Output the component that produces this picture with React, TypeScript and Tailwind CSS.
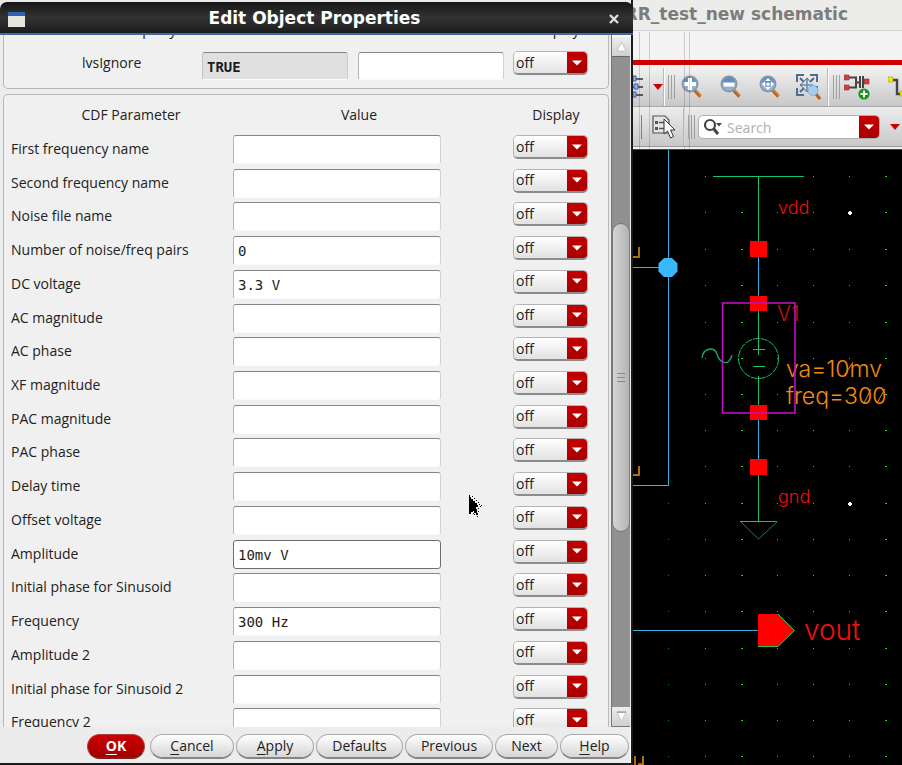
import { useId } from "react";

type Param = { label: string; value?: string; active?: boolean };

const params: Param[] = [
  { label: "First frequency name" },
  { label: "Second frequency name" },
  { label: "Noise file name" },
  { label: "Number of noise/freq pairs", value: "0" },
  { label: "DC voltage", value: "3.3 V" },
  { label: "AC magnitude" },
  { label: "AC phase" },
  { label: "XF magnitude" },
  { label: "PAC magnitude" },
  { label: "PAC phase" },
  { label: "Delay time" },
  { label: "Offset voltage" },
  { label: "Amplitude", value: "10mv V", active: true },
  { label: "Initial phase for Sinusoid" },
  { label: "Frequency", value: "300 Hz" },
  { label: "Amplitude 2" },
  { label: "Initial phase for Sinusoid 2" },
  { label: "Frequency 2" },
];

function DisplaySelect({ label }: { label: string }) {
  return (
    <div className="relative h-6 w-[75px] overflow-hidden rounded-[5px] border border-[#b4b4b4] border-b-2 border-b-[#8c8c8c]">
      <select
        aria-label={label}
        defaultValue="off"
        className="block h-full w-full appearance-none bg-linear-to-b from-white to-[#e2e2e2] pl-[2px] text-[14px] leading-5 text-[#222] outline-none"
      >
        <option>off</option>
        <option>value</option>
        <option>name</option>
        <option>both</option>
      </select>
      <span className="pointer-events-none absolute inset-y-0 right-0 flex w-5 items-center justify-center bg-linear-to-b from-[#c40000] to-[#a80000]">
        <svg width="10" height="6" viewBox="0 0 10 6">
          <path d="M0 0.5H10L5 5.5Z" fill="#fff" />
        </svg>
      </span>
    </div>
  );
}

const fieldText =
  "block rounded-[3px] border px-[4px] pt-[1px] font-['DejaVu_Sans_Mono','Liberation_Mono',monospace] text-[14px] text-[#1c1c1c] outline-none";
const fieldBase = `${fieldText} border-b-[#fafafa] border-t-[#868686]`;

function ParamRow({ label, value, active }: Param) {
  const id = useId();
  return (
    <div className="flex items-start">
      <label htmlFor={id} className="w-[229px] shrink-0 pl-[7px] leading-[34px]">
        {label}
      </label>
      <input
        id={id}
        defaultValue={value ?? ""}
        className={
          active
            ? `${fieldText} mt-[3px] h-[29px] w-[208px] border-[#6e6e6e] bg-white`
            : `${fieldBase} mt-[3px] h-[29px] w-[208px] border-l-[#b5b5b5] border-r-[#d2d2d2] bg-white`
        }
      />
      <div className="mt-[3px] ml-auto pr-5">
        <DisplaySelect label={`${label} display`} />
      </div>
    </div>
  );
}

function ScrollBar() {
  return (
    <div className="flex w-[19px] shrink-0 flex-col border-l border-[#777] bg-[#909090]">
      <button aria-label="Scroll up" className="flex h-[22px] items-center justify-center border-t-2 border-b border-t-[#f8f8f8] border-b-[#666] bg-linear-to-b from-[#eee] to-[#cfcfcf]">
        <svg width="11" height="11" viewBox="0 0 11 11">
          <path d="M5.5 1L10 10H1Z" fill="#fff" stroke="#aaa" strokeWidth="0.6" />
        </svg>
      </button>
      <div className="grow-[167] basis-0" />
      <div className="flex grow-[307] basis-0 items-center justify-center rounded-[9px] border border-[#777] bg-linear-to-r from-[#d4d4d4] to-[#b4b4b4]">
        <svg width="8" height="9" viewBox="0 0 8 9">
          <path d="M0 0.5H8M0 4.5H8M0 8.5H8" stroke="#8a8a8a" />
        </svg>
      </div>
      <div className="grow-[176] basis-0" />
      <button aria-label="Scroll down" className="flex h-5 items-center justify-center border-b border-[#777] bg-linear-to-b from-[#eee] to-[#cfcfcf]">
        <svg width="11" height="11" viewBox="0 0 11 11">
          <path d="M1 1.5H10L5.5 10Z" fill="#fff" stroke="#aaa" strokeWidth="0.6" />
          <path d="M1 1H10" stroke="#888" />
        </svg>
      </button>
    </div>
  );
}

const pill =
  "h-[25px] rounded-full border border-[#a8a8a8] border-b-2 border-b-[#858585] bg-linear-to-b from-white to-[#d6d6d6] text-center leading-5 text-[#222]";

function Dialog() {
  return (
    <section
      aria-label="Edit Object Properties"
      className="relative z-10 flex w-[633px] shrink-0 flex-col border-r-2 border-b-2 border-[#1b1b1b] bg-[#ececec] font-['Open_Sans','Noto_Sans',sans-serif] text-[14px] text-[#222]"
    >
      <div className="bg-[#e8e8e6] pt-[2px]">
        <header className="-mr-[2px] flex h-[33px] items-center rounded-t-[7px] border-b-2 border-[#4668a0] bg-linear-to-b from-[#161616] via-[#333] to-[#1c1c1c] px-2 pt-[3px] text-white">
          <svg width="17" height="15" viewBox="0 0 17 15">
            <rect width="17" height="15" fill="#e6e6dc" />
            <rect width="17" height="4" fill="#2f62b0" />
          </svg>
          <h1 className="flex-1 pr-1 text-center font-['DejaVu_Sans',sans-serif] text-[17px] font-bold">
            Edit Object Properties
          </h1>
          <button aria-label="Close" className="mr-[5px]">
            <svg width="12" height="12" viewBox="0 0 12 12">
              <path d="M2 2L10 10M10 2L2 10" stroke="#ddd" strokeWidth="2.4" />
            </svg>
          </button>
        </header>
      </div>

      <div className="flex min-h-0 flex-1 overflow-hidden pr-[1px]">
        <div className="flex min-w-0 flex-1 flex-col gap-[5px] overflow-hidden pr-[2px] pl-[3px]">
          <div className="h-[54px] shrink-0 rounded-b-[5px] border border-t-0 border-[#b8b8b8] bg-[#f0f0f0]">
            <div className="flex h-1 items-end justify-between overflow-hidden leading-[18px]">
              <span className="w-[254px] text-center">User Property</span>
              <span className="w-[104px] text-center">Display</span>
            </div>
            <div className="flex items-start pl-[78px]">
              <label htmlFor="lvs-master" className="w-[120px] shrink-0 pt-[11px] leading-[26px]">
                lvsIgnore
              </label>
              <input
                id="lvs-master"
                readOnly
                defaultValue="TRUE"
                className={`${fieldBase} mt-[13px] mr-[10px] h-[28px] w-[146px] border-r-[#ccc] border-l-[#c4c4c4] bg-[#e0e0e0] font-bold`}
              />
              <input
                aria-label="lvsIgnore local value"
                className={`${fieldBase} mt-[13px] h-[28px] w-[146px] border-r-[#d2d2d2] border-l-[#b5b5b5] bg-white`}
              />
              <div className="mt-3 ml-auto pr-5">
                <DisplaySelect label="lvsIgnore display" />
              </div>
            </div>
          </div>

          <div className="shrink-0 rounded-t-[5px] border border-b-0 border-[#b8b8b8] bg-[#f0f0f0]">
            <div className="flex h-[37px] justify-between leading-[39px]">
              <span className="w-[254px] text-center">CDF Parameter</span>
              <span className="w-[202px] text-center">Value</span>
              <span className="ml-auto w-[104px] text-center">Display</span>
            </div>
            <div className="grid h-[607px] auto-rows-fr">
              {params.map((p) => (
                <ParamRow key={p.label} {...p} />
              ))}
            </div>
          </div>
        </div>
        <ScrollBar />
      </div>

      <footer className="flex h-9 shrink-0 items-center justify-end gap-[2px] border-r border-white pt-[2px] pr-[1px]">
        <button className="mr-[3px] h-[25px] w-[58px] rounded-full border border-[#b04040] border-b-2 border-b-[#7a2020] bg-linear-to-b from-[#cc0000] to-[#a60000] leading-5 font-bold text-white">
          <u className="underline-offset-3">O</u>K
        </button>
        <button className={`${pill} w-[84px]`}>
          <u className="underline-offset-3">C</u>ancel
        </button>
        <button className={`${pill} w-[78px]`}>
          <u className="underline-offset-3">A</u>pply
        </button>
        <button className={`${pill} w-[87px]`}>Defaults</button>
        <button className={`${pill} w-[88px]`}>Previous</button>
        <button className={`${pill} w-[63px]`}>Next</button>
        <button className={`${pill} w-[69px]`}>
          <u className="underline-offset-3">H</u>elp
        </button>
      </footer>

      <svg className="absolute top-[494px] left-[469px]" width="14" height="26" viewBox="0 0 14 26" shapeRendering="crispEdges">
        <path d="M0 1H1V3H2V5H4V7H6V9H8V11H9V13H7V15H8V19H9V21H7V19H5V17H4V18H2V20H0Z" fill="#000" />
        <path d="M3 2h1v1h-1zM5 4h1v1h-1zM7 6h1v1h-1zM9 8h1v1h-1zM10 10h1v1h-1zM11 12h1v1h-1zM9 14h1v1h-1zM9 17h1v1h-1zM5 20h1v1h-1zM8 22h1v1h-1zM12 11h1v1h-1zM4 19h1v1h-1z" fill="#000" />
      </svg>
    </section>
  );
}

function Grip() {
  return (
    <svg width="7" height="24" viewBox="0 0 7 24" className="shrink-0">
      <path d="M0.5 0V24M3.5 0V24M6.5 0V24" stroke="#a0a0a0" />
    </svg>
  );
}

function Magnifier({ kind }: { kind: "in" | "out" | "fit" }) {
  return (
    <svg width="22" height="24" viewBox="0 0 22 24" className="shrink-0">
      <path d="M13.5 15L19.5 21.5" stroke="#b4601c" strokeWidth="3.4" />
      <path d="M14.5 15L20 21" stroke="#e09a50" strokeWidth="1" />
      <circle cx="9" cy="9" r="7.6" fill="#8fb3d6" stroke="#8a96a4" strokeWidth="1.8" />
      <path d="M3 8A6 6 0 0 1 15 8Z" fill="#5f8fc0" />
      {kind === "in" && <path d="M9 3V15M3 9H15" stroke="#fff" strokeWidth="4" />}
      {kind === "out" && <path d="M3.6 9.5H14.4" stroke="#fff" strokeWidth="4" />}
      {kind === "fit" && (
        <g fill="#fff">
          <path d="M9 3L12 6H6ZM9 15L12 12H6ZM3 9L6 6V12ZM15 9L12 6V12Z" />
          <circle cx="9" cy="9" r="1.6" />
        </g>
      )}
    </svg>
  );
}

function RedTriangle() {
  return (
    <svg width="10" height="6" viewBox="0 0 10 6" className="shrink-0">
      <path d="M0 0H10L5 6Z" fill="#cc0000" />
    </svg>
  );
}

function Divider() {
  return <span className="h-full w-[2px] shrink-0 border-r border-white bg-[#b8b8b8]" />;
}

const cols = [705, 741, 777, 813, 849, 885];
const rowsY = [176, 212, 249, 285, 322, 358, 394, 430, 466, 503, 539, 575, 611, 648, 684, 720, 756];
const whiteDots = [[849, 212], [849, 503]];

function Schematic() {
  return (
    <div className="min-h-0 flex-1 overflow-hidden bg-black">
      <svg width="269" height="615" viewBox="633 150 269 615" className="font-['Inter',sans-serif] font-light">
        <g shapeRendering="crispEdges">
          {cols.map((x) =>
            rowsY.map((y) => (
              <rect key={`${x}-${y}`} x={x} y={y} width={x === 885 || x === 741 ? 2 : 1} height="1" fill="#14d81c" />
            ))
          )}
          {rowsY.slice(9).map((y) => (
            <rect key={y} x="668" y={y} width="1" height="1" fill="#0b8a1c" />
          ))}
          {whiteDots.map(([x, y]) => (
            <path key={y} d={`M${x - 1} ${y}h4v2h-4zM${x} ${y - 1}h2v4h-2z`} fill="#fff" />
          ))}
          <path d="M668.5 150V485.5H633M633 267.5H668M758.5 249V303M758.5 412V467M633 630.5H758" fill="none" stroke="#30b4e8" />
          <path d="M713 176.5H804M758.5 176V249M758.5 303V355M758.5 376V412M758.5 467V521M753 349.5H765M753 366.5H765M740 521.5H777" fill="none" stroke="#0fc46a" />
          <path d="M633 257H639V247M633 475H639V466M635 765V756M643 765V756M638 764H643" fill="none" stroke="#b06c10" strokeWidth="2" />
          <g fill="#ff0000">
            <rect x="750" y="241" width="17" height="16" />
            <rect x="750" y="296" width="17" height="15" />
            <rect x="750" y="405" width="17" height="15" />
            <rect x="750" y="459" width="17" height="16" />
          </g>
        </g>
        <path d="M664 258h8l5.500 5.500v8l-5.500 5.500h-8l-5.500-5.500v-8z" fill="#3ab8ff" />
        <path d="M741 522L758.500 539L777 522" fill="none" stroke="#0a8a4c" />
        <circle cx="758.500" cy="358.500" r="20" fill="none" stroke="#0fc46a" strokeDasharray="7 1" />
        <path d="M702 358C703 348 714 346 717 354C719 362 729 368 732 355" fill="none" stroke="#0fb060" strokeWidth="1.300" />
        <path d="M758 614H778L794.500 630.500L778 646.500H758Z" fill="#ff0000" />
        <path d="M778 614L794.500 630.500L778 646.500H758" fill="none" stroke="#30c040" />
        <text x="778" y="214" fontSize="18" fill="#f01010">vdd</text>
        <text x="777" y="321" fontSize="21" fill="#c81010">V1</text>
        <g fill="#f08a10" fontSize="23">
          <text x="786" y="377">va=10mv</text>
          <text x="786" y="404">freq=300</text>
        </g>
        {/* Slashes through the zeros of the stroke font */}
        <path d="M844 376L853 362M864 403L871 389M877 403L885 389" stroke="#f08a10" />
        <rect x="722.500" y="303" width="72.500" height="110" fill="none" stroke="#c010c0" strokeWidth="1.600" />
        <text x="778" y="503" fontSize="18" fill="#f01010">gnd</text>
        <text x="804" y="640" fontSize="28" fill="#f01010">vout</text>
      </svg>
    </div>
  );
}

function SchematicWindow() {
  return (
    <main className="relative flex min-w-0 flex-1 flex-col bg-[#f4f4f4]">
      <div className="flex h-[31px] shrink-0 justify-end overflow-hidden border-b border-[#d4d4d4] bg-[#ececea] pr-[54px] font-['DejaVu_Sans',sans-serif] text-[17px] leading-[28px] font-bold whitespace-nowrap text-[#7c7c7c]">
        RR_test_new schematic
      </div>
      <div className="h-[29px] shrink-0" />
      <div className="h-[5px] shrink-0 bg-[#d00000]" />
      <div className="flex h-[42px] shrink-0 items-center overflow-hidden border-b border-[#a8a8a8] bg-linear-to-b from-[#f4f4f4] to-[#c8c8c8] pt-[3px]">
        <svg width="11" height="24" viewBox="0 0 11 24" className="mr-[9px] shrink-0">
          <path d="M0 4H10M0 12H10M0 20H10" stroke="#333" strokeWidth="1.400" />
          <path d="M0 1h3v5h-3zM1 9h4v5h-4zM0 17h3v5h-3z" fill="#8fb0e8" stroke="#3c5ea8" />
        </svg>
        <RedTriangle />
        <span className="w-[1px]" />
        <Divider />
        <span className="mr-[6px] ml-[3px] flex"><Grip /></span>
        <div className="flex gap-[17px]">
          <Magnifier kind="in" />
          <Magnifier kind="out" />
          <Magnifier kind="fit" />
        </div>
        <svg width="25" height="26" viewBox="0 0 25 26" className="mr-[6px] ml-[15px] shrink-0">
          <path d="M1 8V1H8M14 1H21V8M1 14V21H8M21 12V17M4 4L8 8M18 4L14 8M4 18L8 14" fill="none" stroke="#4c6c90" strokeWidth="2" />
          <path d="M11 5V17M5 11H17" stroke="#6b8db4" strokeWidth="1.600" />
          <path d="M8.500 7L11 4L13.500 7M8.500 15L11 18L13.500 15M7 8.500L4 11L7 13.500" fill="none" stroke="#4c6c90" />
          <path d="M20 20L24 25" stroke="#b4601c" strokeWidth="3" />
          <circle cx="17" cy="16.500" r="5" fill="#a4cdf0" stroke="#86aed4" />
        </svg>
        <Divider />
        <span className="mr-[4px] ml-[4px] flex"><Grip /></span>
        <svg width="27" height="26" viewBox="0 0 27 26" className="mr-[17px] shrink-0">
          <path d="M4 3.500H12V13.500H4M12 8.500H16M16 2V14M19 2V14M19 8H24" fill="none" stroke="#444" strokeWidth="2" />
          <path d="M0 1h5v5h-5zM0 11h5v5h-5zM20 5h5v5h-5z" fill="#cc4048" stroke="#a02830" strokeWidth="0.600" />
          <circle cx="20" cy="20" r="5.600" fill="#109818" />
          <path d="M20 16.500V23.500M16.500 20H23.500" stroke="#fff" strokeWidth="2" />
        </svg>
        <svg width="16" height="24" viewBox="0 0 16 24" className="shrink-0">
          <path d="M3 5H9V19H15" fill="none" stroke="#444" strokeWidth="2.400" />
          <path d="M0 2h5v5h-5zM12 16h4v5h-4z" fill="#f4e800" stroke="#a09a20" strokeWidth="0.600" />
        </svg>
      </div>
      <div className="flex h-10 shrink-0 items-center overflow-hidden border-b border-[#999] bg-linear-to-b from-[#ededed] to-[#c8c8c8] pt-[1px]">
        <span className="mr-[10px] ml-[8px] h-6 w-[1px] shrink-0 bg-[#808080]" />
        <svg width="24" height="26" viewBox="0 0 24 26" className="mr-[7px] shrink-0">
          <path d="M1 2H13L17 6V19H1Z" fill="#e4e4e4" stroke="#555" strokeWidth="1.200" />
          <path d="M3 7h3v3h-3zM3 13h3v3h-3z" fill="#555" />
          <path d="M7 8.500H12M7 14.500H12" stroke="#555" strokeWidth="1.500" />
          <path d="M12 5V20L15.500 17L18.500 24L21.500 22.500L18.500 16H23Z" fill="#fff" stroke="#333" />
        </svg>
        <Divider />
        <span className="mr-[3px] ml-[3px] flex"><Grip /></span>
        <div className="flex h-6 min-w-0 flex-1 overflow-hidden rounded-[5px] border border-[#b0b0b0] bg-white">
          <svg width="22" height="20" viewBox="0 0 22 20" className="mt-[1px] ml-[3px] shrink-0">
            <circle cx="8" cy="8" r="5" fill="none" stroke="#444" strokeWidth="2.200" />
            <path d="M11.500 11.500L16 17" stroke="#444" strokeWidth="3" />
            <path d="M14 6H20L17 9.500Z" fill="#444" />
          </svg>
          <input
            type="search"
            aria-label="Search"
            placeholder="Search"
            className="w-0 min-w-0 flex-1 pl-[3px] font-['Noto_Sans',sans-serif] text-[14px] outline-none placeholder:text-[#b4b4b4]"
          />
          <button aria-label="Search options" className="flex w-5 items-center justify-center bg-linear-to-b from-[#c40000] to-[#a80000]">
            <svg width="10" height="6" viewBox="0 0 10 6">
              <path d="M0 0.500H10L5 5.500Z" fill="#fff" />
            </svg>
          </button>
        </div>
        <span className="mr-[2px] ml-[10px] flex"><RedTriangle /></span>
      </div>
      <div className="h-[3px] shrink-0 border-b border-[#444] bg-[#f0f0f0]" />
      <Schematic />
      <svg className="pointer-events-none absolute top-[32px] left-0" width="60" height="118" viewBox="0 0 60 118" shapeRendering="crispEdges">
        <path d="M6.500 0V118M16.500 0V118M51.500 0V118M56.500 0V118" stroke="#000" strokeOpacity="0.160" />
      </svg>
    </main>
  );
}

export default function App() {
  return (
    <div className="flex h-screen overflow-hidden bg-black">
      <Dialog />
      <SchematicWindow />
    </div>
  );
}
